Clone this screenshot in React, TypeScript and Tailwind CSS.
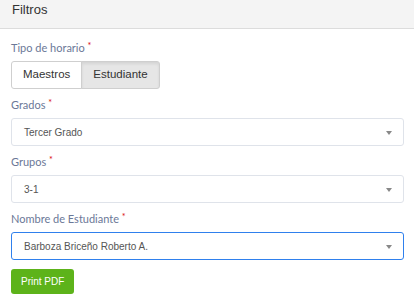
import { useState } from 'react';

const FIELDS = [
  { label: 'Grados', value: 'Tercer Grado', focused: false },
  { label: 'Grupos', value: '3-1', focused: false },
  { label: 'Nombre de Estudiante', value: 'Barboza Briceño Roberto A.', focused: true },
];

function FieldLabel({ text }: { text: string }) {
  return (
    <label className="block h-[17px] mb-[5px] text-[11px] leading-[17px] text-[#6b7897] font-['Lato',sans-serif]">
      {text} <span className="text-[#d9070c] text-[9px] align-top leading-[14px]">*</span>
    </label>
  );
}

function SelectBox({ value, focused }: { value: string; focused: boolean }) {
  return (
    <div
      className={`flex items-center justify-between h-[28px] rounded-[3px] border pl-[12px] pr-[11px] bg-white ${
        focused ? 'border-[#2f80ed]' : 'border-[#dfe3ea]'
      }`}
    >
      <span className="text-[10px] text-[#555] font-['Liberation_Sans',Arial,sans-serif]">{value}</span>
      <svg width="6" height="4" viewBox="0 0 6 4" className="mt-[1px]">
        <path d="M0 0h6L3 4z" fill="#888" />
      </svg>
    </div>
  );
}

export default function App() {
  const [tipo, setTipo] = useState('Estudiante');

  return (
    <div className="w-[414px] h-[306px] bg-white overflow-hidden font-['Liberation_Sans',Arial,sans-serif]">
      {/* Header */}
      <div className="h-[29px] bg-[#f4f4f4] border-b border-[#dcdcdc] px-[12px]">
        <h3 className="text-[13px] leading-[20px] text-[#333]">Filtros</h3>
      </div>

      <div className="pt-[10px] pl-[11px] pr-[10px]">
        {/* Tipo de horario */}
        <FieldLabel text="Tipo de horario" />
        <div className="flex">
          {['Maestros', 'Estudiante'].map((opt, i) => (
            <button
              key={opt}
              onClick={() => setTipo(opt)}
              className={`h-[28px] px-[11px] border border-[#cfcfcf] text-[11.5px] text-[#333] ${
                i === 0 ? 'rounded-l-[3px]' : 'rounded-r-[3px] -ml-px'
              } ${tipo === opt ? 'bg-[#e6e6e6] shadow-[inset_0_2px_3px_rgba(0,0,0,0.08)]' : 'bg-white'}`}
            >
              {opt}
            </button>
          ))}
        </div>

        {FIELDS.map(f => (
          <div key={f.label} className="mt-[7px]">
            <FieldLabel text={f.label} />
            <SelectBox value={f.value} focused={f.focused} />
          </div>
        ))}

        <button className="mt-[9px] h-[25px] px-[10px] rounded-[3px] bg-[#5db31a] text-white text-[10px]">
          Print PDF
        </button>
      </div>
    </div>
  );
}
